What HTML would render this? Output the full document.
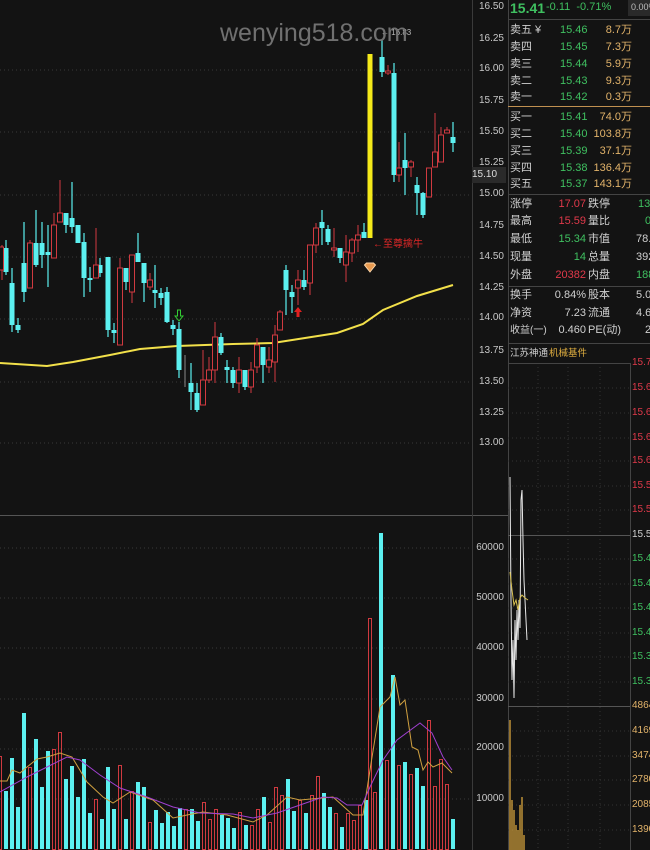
<!DOCTYPE html>
<html><head><meta charset="utf-8"><style>
body{margin:0;width:650px;height:850px;background:#131313;overflow:hidden;position:relative;font-family:"Liberation Sans","Noto Sans CJK SC",sans-serif;}
.t{position:absolute;font-size:11px;white-space:nowrap;line-height:13px}
.ax{position:absolute;font-size:10px;color:#c8c8c8;width:32px;text-align:right;left:472px;line-height:12px}
.g{color:#3fc060}.r{color:#e0394a}.o{color:#e2b36a}.w{color:#d0d0d0}
.rl{position:absolute;font-size:10px;left:632px;line-height:12px}
</style></head><body>
<svg width="650" height="850" style="position:absolute;left:0;top:0">
<g stroke="#3a3a3a" stroke-dasharray="1,3" stroke-width="1">
<line x1="0" y1="70" x2="470" y2="70"/><line x1="0" y1="132" x2="470" y2="132"/><line x1="0" y1="195" x2="470" y2="195"/><line x1="0" y1="257" x2="470" y2="257"/><line x1="0" y1="319" x2="470" y2="319"/><line x1="0" y1="382" x2="470" y2="382"/><line x1="0" y1="443" x2="470" y2="443"/>
<line x1="0" y1="548" x2="470" y2="548"/><line x1="0" y1="598" x2="470" y2="598"/><line x1="0" y1="648" x2="470" y2="648"/><line x1="0" y1="699" x2="470" y2="699"/><line x1="0" y1="749" x2="470" y2="749"/><line x1="0" y1="799" x2="470" y2="799"/>
</g>
<line x1="0" y1="515.5" x2="508" y2="515.5" stroke="#555"/>
<line x1="472.5" y1="0" x2="472.5" y2="850" stroke="#3a3a3a"/>
<line x1="508.5" y1="0" x2="508.5" y2="850" stroke="#444"/>
<polyline fill="none" stroke="#f2e04a" stroke-width="2" points="0,363 47,366 73,362 110,355 140,349 177,346 233,344 273,343 337,333 363,324 383,310 417,296 453,285"/>
<g stroke="#5cf0f0" stroke-width="1.2">
<line x1="6" y1="240" x2="6" y2="275"/><line x1="12" y1="268" x2="12" y2="332"/><line x1="18" y1="318" x2="18" y2="333"/><line x1="24" y1="222" x2="24" y2="302"/><line x1="36" y1="210" x2="36" y2="267"/><line x1="42" y1="222" x2="42" y2="268"/><line x1="48" y1="225" x2="48" y2="287"/><line x1="66" y1="213" x2="66" y2="233"/><line x1="72" y1="182" x2="72" y2="233"/><line x1="78" y1="225" x2="78" y2="243"/><line x1="84" y1="233" x2="84" y2="297"/><line x1="90" y1="267" x2="90" y2="292"/><line x1="100" y1="258" x2="100" y2="277"/><line x1="108" y1="257" x2="108" y2="337"/><line x1="114" y1="323" x2="114" y2="343"/><line x1="126" y1="268" x2="126" y2="290"/><line x1="138" y1="233" x2="138" y2="262"/><line x1="144" y1="263" x2="144" y2="302"/><line x1="155" y1="265" x2="155" y2="308"/><line x1="161" y1="288" x2="161" y2="305"/><line x1="167" y1="287" x2="167" y2="323"/><line x1="173" y1="320" x2="173" y2="335"/><line x1="179" y1="322" x2="179" y2="378"/><line x1="191" y1="363" x2="191" y2="410"/><line x1="197" y1="383" x2="197" y2="412"/><line x1="221" y1="333" x2="221" y2="355"/><line x1="227" y1="360" x2="227" y2="383"/><line x1="233" y1="367" x2="233" y2="388"/><line x1="245" y1="370" x2="245" y2="390"/><line x1="263" y1="347" x2="263" y2="383"/><line x1="286" y1="265" x2="286" y2="315"/><line x1="292" y1="285" x2="292" y2="313"/><line x1="304" y1="270" x2="304" y2="290"/><line x1="322" y1="210" x2="322" y2="245"/><line x1="328" y1="225" x2="328" y2="245"/><line x1="340" y1="248" x2="340" y2="263"/><line x1="364" y1="223" x2="364" y2="238"/><line x1="382" y1="40" x2="382" y2="77"/><line x1="394" y1="63" x2="394" y2="182"/><line x1="405" y1="133" x2="405" y2="195"/><line x1="417" y1="177" x2="417" y2="215"/><line x1="423" y1="192" x2="423" y2="218"/><line x1="453" y1="122" x2="453" y2="152"/>
</g>
<g fill="#5cf0f0">
<rect x="3.5" y="248" width="5" height="24"/><rect x="9.5" y="283" width="5" height="42"/><rect x="15.5" y="325" width="5" height="5"/><rect x="21.5" y="263" width="5" height="29"/><rect x="33.5" y="243" width="5" height="22"/><rect x="39.5" y="243" width="5" height="12"/><rect x="45.5" y="252" width="5" height="3"/><rect x="63.5" y="213" width="5" height="12"/><rect x="69.5" y="218" width="5" height="9"/><rect x="75.5" y="225" width="5" height="18"/><rect x="81.5" y="242" width="5" height="36"/><rect x="87.5" y="278" width="5" height="2"/><rect x="97.5" y="265" width="5" height="8"/><rect x="105.5" y="257" width="5" height="73"/><rect x="111.5" y="330" width="5" height="3"/><rect x="123.5" y="268" width="5" height="14"/><rect x="135.5" y="253" width="5" height="9"/><rect x="141.5" y="263" width="5" height="20"/><rect x="152.5" y="290" width="5" height="3"/><rect x="158.5" y="293" width="5" height="5"/><rect x="164.5" y="292" width="5" height="30"/><rect x="170.5" y="325" width="5" height="4"/><rect x="176.5" y="329" width="5" height="41"/><rect x="188.5" y="383" width="5" height="9"/><rect x="194.5" y="393" width="5" height="17"/><rect x="218.5" y="337" width="5" height="16"/><rect x="224.5" y="367" width="5" height="3"/><rect x="230.5" y="370" width="5" height="13"/><rect x="242.5" y="370" width="5" height="17"/><rect x="260.5" y="347" width="5" height="18"/><rect x="283.5" y="270" width="5" height="20"/><rect x="289.5" y="292" width="5" height="5"/><rect x="301.5" y="280" width="5" height="7"/><rect x="319.5" y="222" width="5" height="6"/><rect x="325.5" y="229" width="5" height="13"/><rect x="337.5" y="248" width="5" height="10"/><rect x="361.5" y="232" width="5" height="6"/><rect x="379.5" y="57" width="5" height="15"/><rect x="391.5" y="73" width="5" height="102"/><rect x="402.5" y="160" width="5" height="8"/><rect x="414.5" y="185" width="5" height="8"/><rect x="420.5" y="193" width="5" height="22"/><rect x="450.5" y="137" width="5" height="6"/>
</g>
<g stroke="#d03a40" stroke-width="1">
<line x1="2" y1="245" x2="2" y2="280"/><line x1="30" y1="240" x2="30" y2="288"/><line x1="54" y1="213" x2="54" y2="258"/><line x1="60" y1="180" x2="60" y2="222"/><line x1="96" y1="228" x2="96" y2="278"/><line x1="120" y1="258" x2="120" y2="345"/><line x1="132" y1="255" x2="132" y2="303"/><line x1="150" y1="273" x2="150" y2="290"/><line x1="185" y1="355" x2="185" y2="387" stroke="#888"/><line x1="203" y1="350" x2="203" y2="405"/><line x1="209" y1="357" x2="209" y2="383"/><line x1="215" y1="322" x2="215" y2="383"/><line x1="239" y1="357" x2="239" y2="393"/><line x1="251" y1="362" x2="251" y2="393"/><line x1="257" y1="338" x2="257" y2="373"/><line x1="269" y1="347" x2="269" y2="373"/><line x1="275" y1="325" x2="275" y2="382"/><line x1="280" y1="310" x2="280" y2="330"/><line x1="298" y1="270" x2="298" y2="305"/><line x1="310" y1="245" x2="310" y2="295"/><line x1="316" y1="223" x2="316" y2="253"/><line x1="334" y1="228" x2="334" y2="257"/><line x1="346" y1="235" x2="346" y2="282"/><line x1="352" y1="238" x2="352" y2="262"/><line x1="358" y1="225" x2="358" y2="252"/><line x1="388" y1="65" x2="388" y2="75"/><line x1="399" y1="142" x2="399" y2="182"/><line x1="411" y1="160" x2="411" y2="177"/><line x1="435" y1="113" x2="435" y2="167"/><line x1="441" y1="127" x2="441" y2="162"/><line x1="447" y1="127" x2="447" y2="133"/>
</g>
<g stroke="#d03a40" fill="#131313" stroke-width="1">
<rect x="-0.5" y="247" width="4" height="23"/><rect x="27.5" y="243" width="5" height="45"/><rect x="51.5" y="225" width="5" height="33"/><rect x="57.5" y="213" width="5" height="9"/><rect x="93.5" y="265" width="5" height="13"/><rect x="117.5" y="268" width="5" height="77"/><rect x="129.5" y="255" width="5" height="37"/><rect x="147.5" y="280" width="5" height="7"/><rect x="200.5" y="380" width="5" height="25"/><rect x="206.5" y="370" width="5" height="10"/><rect x="212.5" y="337" width="5" height="33"/><rect x="236.5" y="370" width="5" height="13"/><rect x="248.5" y="370" width="5" height="17"/><rect x="254.5" y="345" width="5" height="22"/><rect x="266.5" y="360" width="5" height="7"/><rect x="272.5" y="335" width="5" height="27"/><rect x="277.5" y="312" width="5" height="18"/><rect x="295.5" y="280" width="5" height="8"/><rect x="307.5" y="245" width="5" height="38"/><rect x="313.5" y="228" width="5" height="17"/><rect x="331.5" y="248" width="5" height="2"/><rect x="343.5" y="252" width="5" height="13"/><rect x="349.5" y="240" width="5" height="13"/><rect x="355.5" y="235" width="5" height="5"/><rect x="385.5" y="71" width="5" height="2"/><rect x="396.5" y="168" width="5" height="7"/><rect x="408.5" y="162" width="5" height="5"/><rect x="426.5" y="168" width="5" height="29"/><rect x="432.5" y="152" width="5" height="15"/><rect x="438.5" y="135" width="5" height="27"/><rect x="444.5" y="130" width="5" height="3"/>
</g>
<rect x="367.5" y="54" width="5" height="184" fill="#f5ea1a"/>
<path d="M298 307 L294 312 L296.5 312 L296.5 317 L299.5 317 L299.5 312 L302 312 Z" fill="#e02020"/>
<path d="M179 321 L175 316 L177.5 316 L177.5 310 L180.5 310 L180.5 316 L183 316 Z" fill="none" stroke="#3c3" stroke-width="1"/>
<path d="M364.5 265 L366.5 263 L373.5 263 L375.5 265 L370 272 Z" fill="#e89a50" stroke="#fcd6a8" stroke-width="1"/>
<text x="373" y="247" font-size="10" fill="#e02828" font-family="Liberation Sans,Noto Sans CJK SC,sans-serif">←至尊擒牛</text>
<text x="381" y="35" font-size="8" fill="#bbb" font-family="Liberation Sans,sans-serif">← 16.83</text>
<g fill="#5cf0f0">
<rect x="4" y="791" width="4" height="58"/><rect x="10" y="758" width="4" height="91"/><rect x="16" y="807" width="4" height="42"/><rect x="22" y="713" width="4" height="136"/><rect x="34" y="739" width="4" height="110"/><rect x="40" y="787" width="4" height="62"/><rect x="46" y="751" width="4" height="98"/><rect x="64" y="779" width="4" height="70"/><rect x="70" y="766" width="4" height="83"/><rect x="76" y="797" width="4" height="52"/><rect x="82" y="759" width="4" height="90"/><rect x="88" y="813" width="4" height="36"/><rect x="100" y="819" width="4" height="30"/><rect x="106" y="767" width="4" height="82"/><rect x="112" y="809" width="4" height="40"/><rect x="124" y="819" width="4" height="30"/><rect x="136" y="782" width="4" height="67"/><rect x="142" y="787" width="4" height="62"/><rect x="154" y="810" width="4" height="39"/><rect x="160" y="823" width="4" height="26"/><rect x="166" y="812" width="4" height="37"/><rect x="172" y="826" width="4" height="23"/><rect x="178" y="808" width="4" height="41"/><rect x="190" y="809" width="4" height="40"/><rect x="196" y="821" width="4" height="28"/><rect x="220" y="815" width="4" height="34"/><rect x="226" y="818" width="4" height="31"/><rect x="232" y="828" width="4" height="21"/><rect x="244" y="825" width="4" height="24"/><rect x="262" y="797" width="4" height="52"/><rect x="286" y="779" width="4" height="70"/><rect x="292" y="811" width="4" height="38"/><rect x="304" y="813" width="4" height="36"/><rect x="322" y="793" width="4" height="56"/><rect x="328" y="807" width="4" height="42"/><rect x="340" y="827" width="4" height="22"/><rect x="364" y="800" width="4" height="49"/><rect x="379" y="533" width="4" height="316"/><rect x="391" y="675" width="4" height="174"/><rect x="403" y="762" width="4" height="87"/><rect x="415" y="768" width="4" height="81"/><rect x="421" y="786" width="4" height="63"/><rect x="451" y="819" width="4" height="30"/>
</g>
<g stroke="#d03a40" fill="none">
<rect x="-1.5" y="756.5" width="3" height="93"/><rect x="28.5" y="767.5" width="3" height="82"/><rect x="52.5" y="749.5" width="3" height="100"/><rect x="58.5" y="732.5" width="3" height="117"/><rect x="94.5" y="799.5" width="3" height="50"/><rect x="118.5" y="765.5" width="3" height="84"/><rect x="130.5" y="791.5" width="3" height="58"/><rect x="148.5" y="822.5" width="3" height="27"/><rect x="184.5" y="809.5" width="3" height="40"/><rect x="202.5" y="802.5" width="3" height="47"/><rect x="208.5" y="819.5" width="3" height="30"/><rect x="214.5" y="809.5" width="3" height="40"/><rect x="238.5" y="812.5" width="3" height="37"/><rect x="250.5" y="825.5" width="3" height="24"/><rect x="256.5" y="809.5" width="3" height="40"/><rect x="268.5" y="822.5" width="3" height="27"/><rect x="274.5" y="787.5" width="3" height="62"/><rect x="280.5" y="795.5" width="3" height="54"/><rect x="298.5" y="800.5" width="3" height="49"/><rect x="310.5" y="795.5" width="3" height="54"/><rect x="316.5" y="776.5" width="3" height="73"/><rect x="334.5" y="813.5" width="3" height="36"/><rect x="346.5" y="813.5" width="3" height="36"/><rect x="352.5" y="820.5" width="3" height="29"/><rect x="358.5" y="805.5" width="3" height="44"/><rect x="368.5" y="618.5" width="3" height="231"/><rect x="373.5" y="792.5" width="3" height="57"/><rect x="385.5" y="760.5" width="3" height="89"/><rect x="397.5" y="765.5" width="3" height="84"/><rect x="409.5" y="774.5" width="3" height="75"/><rect x="427.5" y="720.5" width="3" height="129"/><rect x="433.5" y="786.5" width="3" height="63"/><rect x="439.5" y="759.5" width="3" height="90"/><rect x="445.5" y="784.5" width="3" height="65"/>
</g>
<polyline fill="none" stroke="#d0a040" stroke-width="1" points="0,781 7,781 12,770 20,773 27,767 37,759 47,757 60,753 72,757 87,782 103,797 113,803 130,792 153,800 173,818 187,815 203,812 227,815 253,822 267,815 287,797 300,800 333,797 353,815 363,815 370,770 380,707 390,697 395,677 400,705 405,700 412,747 418,750 423,770 428,762 433,767 442,763 452,773"/>
<polyline fill="none" stroke="#a040d0" stroke-width="1" points="0,792 27,777 47,767 67,757 80,760 100,775 120,788 147,797 173,807 200,813 233,814 253,818 277,813 300,805 323,797 337,798 347,805 362,805 370,787 383,760 397,740 420,723 432,733 443,757 452,770"/>
<g stroke="#333" stroke-dasharray="1,3">
<line x1="508" y1="388" x2="630" y2="388"/><line x1="508" y1="413" x2="630" y2="413"/><line x1="508" y1="438" x2="630" y2="438"/><line x1="508" y1="461" x2="630" y2="461"/><line x1="508" y1="486" x2="630" y2="486"/><line x1="508" y1="510" x2="630" y2="510"/><line x1="508" y1="559" x2="630" y2="559"/><line x1="508" y1="584" x2="630" y2="584"/><line x1="508" y1="608" x2="630" y2="608"/><line x1="508" y1="633" x2="630" y2="633"/><line x1="508" y1="657" x2="630" y2="657"/><line x1="508" y1="682" x2="630" y2="682"/><line x1="508" y1="731" x2="630" y2="731"/><line x1="508" y1="756" x2="630" y2="756"/><line x1="508" y1="780" x2="630" y2="780"/><line x1="508" y1="805" x2="630" y2="805"/><line x1="508" y1="830" x2="630" y2="830"/>
<line x1="538" y1="363" x2="538" y2="850"/><line x1="568" y1="363" x2="568" y2="850"/><line x1="600" y1="363" x2="600" y2="850"/>
</g>
<line x1="508" y1="363.5" x2="630" y2="363.5" stroke="#444"/>
<line x1="508" y1="535.5" x2="630" y2="535.5" stroke="#555"/>
<line x1="508" y1="706.5" x2="630" y2="706.5" stroke="#555"/>
<line x1="630.5" y1="363" x2="630.5" y2="850" stroke="#444"/>
<polyline fill="none" stroke="#e8e8e8" stroke-width="1" points="510,477 511,600 512,680 513,640 514,698 515,620 516,660 517,610 518,640 519,600 520,628 521,500 522,490 523,540 524,580 525,600 526,620 527,640"/>
<polyline fill="none" stroke="#d8c050" stroke-width="1" points="510,572 512,590 514,605 516,600 518,610 520,598 522,595 525,598 528,600"/>
<g stroke="#e8b040" stroke-width="1.2">
<line x1="510" y1="720" x2="510" y2="850"/><line x1="512" y1="800" x2="512" y2="850"/><line x1="514" y1="810" x2="514" y2="850"/><line x1="516" y1="825" x2="516" y2="850"/><line x1="518" y1="830" x2="518" y2="850"/><line x1="520" y1="805" x2="520" y2="850"/><line x1="522" y1="797" x2="522" y2="850"/><line x1="524" y1="835" x2="524" y2="850"/>
</g>
<line x1="508" y1="19.5" x2="650" y2="19.5" stroke="#444"/>
<line x1="508" y1="106.5" x2="650" y2="106.5" stroke="#c09050"/>
<line x1="508" y1="194.5" x2="650" y2="194.5" stroke="#444"/>
<line x1="508" y1="286.5" x2="650" y2="286.5" stroke="#444"/>
<line x1="508" y1="343.5" x2="650" y2="343.5" stroke="#444"/>
<rect x="628" y="0" width="22" height="16" fill="#2a2a2a"/>
<rect x="472" y="167" width="34" height="16" fill="#2a2a2a"/>
</svg>
<div class="t" style="left:220px;top:18px;font-size:25px;line-height:30px;color:#707070">wenying518.com</div>
<div class="ax" style="top:1px">16.50</div><div class="ax" style="top:33px">16.25</div><div class="ax" style="top:63px">16.00</div><div class="ax" style="top:95px">15.75</div><div class="ax" style="top:126px">15.50</div><div class="ax" style="top:157px">15.25</div><div class="ax" style="top:188px">15.00</div><div class="ax" style="top:220px">14.75</div><div class="ax" style="top:251px">14.50</div><div class="ax" style="top:282px">14.25</div><div class="ax" style="top:312px">14.00</div><div class="ax" style="top:345px">13.75</div><div class="ax" style="top:376px">13.50</div><div class="ax" style="top:407px">13.25</div><div class="ax" style="top:437px">13.00</div>
<div class="ax" style="top:169px;left:472px;text-align:left;color:#ddd">15.10</div>
<div class="ax" style="top:542px">60000</div><div class="ax" style="top:592px">50000</div><div class="ax" style="top:642px">40000</div><div class="ax" style="top:693px">30000</div><div class="ax" style="top:742px">20000</div><div class="ax" style="top:793px">10000</div>
<div class="t g" style="left:510px;top:0px;font-size:14px;line-height:16px;font-weight:bold">15.41</div>
<div class="t g" style="left:546px;top:1px;font-size:11px">-0.11&nbsp;&nbsp;-0.71%</div>
<div class="t" style="left:631px;top:1px;font-size:9px;color:#bbb">0.00%</div>
<div class="t w" style="left:510px;top:24px">卖五 ¥</div><div class="t g" style="left:560px;top:24px">15.46</div><div class="t o" style="left:600px;top:24px;width:32px;text-align:right">8.7万</div>
<div class="t w" style="left:510px;top:41px">卖四</div><div class="t g" style="left:560px;top:41px">15.45</div><div class="t o" style="left:600px;top:41px;width:32px;text-align:right">7.3万</div>
<div class="t w" style="left:510px;top:58px">卖三</div><div class="t g" style="left:560px;top:58px">15.44</div><div class="t o" style="left:600px;top:58px;width:32px;text-align:right">5.9万</div>
<div class="t w" style="left:510px;top:75px">卖二</div><div class="t g" style="left:560px;top:75px">15.43</div><div class="t o" style="left:600px;top:75px;width:32px;text-align:right">9.3万</div>
<div class="t w" style="left:510px;top:91px">卖一</div><div class="t g" style="left:560px;top:91px">15.42</div><div class="t o" style="left:600px;top:91px;width:32px;text-align:right">0.3万</div>
<div class="t w" style="left:510px;top:111px">买一</div><div class="t g" style="left:560px;top:111px">15.41</div><div class="t o" style="left:590px;top:111px;width:42px;text-align:right">74.0万</div>
<div class="t w" style="left:510px;top:128px">买二</div><div class="t g" style="left:560px;top:128px">15.40</div><div class="t o" style="left:590px;top:128px;width:42px;text-align:right">103.8万</div>
<div class="t w" style="left:510px;top:145px">买三</div><div class="t g" style="left:560px;top:145px">15.39</div><div class="t o" style="left:590px;top:145px;width:42px;text-align:right">37.1万</div>
<div class="t w" style="left:510px;top:162px">买四</div><div class="t g" style="left:560px;top:162px">15.38</div><div class="t o" style="left:590px;top:162px;width:42px;text-align:right">136.4万</div>
<div class="t w" style="left:510px;top:178px">买五</div><div class="t g" style="left:560px;top:178px">15.37</div><div class="t o" style="left:590px;top:178px;width:42px;text-align:right">143.1万</div>
<div class="t w" style="left:510px;top:198px">涨停</div><div class="t r" style="left:550px;top:198px;width:36px;text-align:right">17.07</div><div class="t w" style="left:588px;top:198px">跌停</div><div class="t g" style="left:638px;top:198px">13</div>
<div class="t w" style="left:510px;top:215px">最高</div><div class="t r" style="left:550px;top:215px;width:36px;text-align:right">15.59</div><div class="t w" style="left:588px;top:215px">量比</div><div class="t g" style="left:645px;top:215px">0</div>
<div class="t w" style="left:510px;top:233px">最低</div><div class="t g" style="left:550px;top:233px;width:36px;text-align:right">15.34</div><div class="t w" style="left:588px;top:233px">市值</div><div class="t w" style="left:636px;top:233px">78.2</div>
<div class="t w" style="left:510px;top:251px">现量</div><div class="t g" style="left:550px;top:251px;width:36px;text-align:right">14</div><div class="t w" style="left:588px;top:251px">总量</div><div class="t w" style="left:636px;top:251px">392</div>
<div class="t w" style="left:510px;top:269px">外盘</div><div class="t r" style="left:540px;top:269px;width:46px;text-align:right">20382</div><div class="t w" style="left:588px;top:269px">内盘</div><div class="t g" style="left:636px;top:269px">188</div>
<div class="t w" style="left:510px;top:289px">换手</div><div class="t w" style="left:540px;top:289px;width:46px;text-align:right">0.84%</div><div class="t w" style="left:588px;top:289px">股本</div><div class="t w" style="left:636px;top:289px">5.08</div>
<div class="t w" style="left:510px;top:307px">净资</div><div class="t w" style="left:540px;top:307px;width:46px;text-align:right">7.23</div><div class="t w" style="left:588px;top:307px">流通</div><div class="t w" style="left:636px;top:307px">4.69</div>
<div class="t w" style="left:510px;top:324px;font-size:10px">收益(一)</div><div class="t w" style="left:546px;top:324px;width:40px;text-align:right">0.460</div><div class="t w" style="left:588px;top:324px">PE(动)</div><div class="t w" style="left:645px;top:324px">2</div>
<div class="t w" style="left:510px;top:347px;font-size:9.5px">江苏神通</div><div class="t" style="left:549px;top:347px;font-size:9.5px;color:#e2b040">机械基件</div>
<div class="rl r" style="top:357px">15.70</div><div class="rl r" style="top:382px">15.67</div><div class="rl r" style="top:407px">15.65</div><div class="rl r" style="top:432px">15.62</div><div class="rl r" style="top:455px">15.60</div><div class="rl r" style="top:480px">15.57</div><div class="rl r" style="top:504px">15.55</div><div class="rl w" style="top:529px">15.52</div><div class="rl g" style="top:553px">15.49</div><div class="rl g" style="top:578px">15.47</div><div class="rl g" style="top:602px">15.44</div><div class="rl g" style="top:627px">15.42</div><div class="rl g" style="top:651px">15.39</div><div class="rl g" style="top:676px">15.37</div><div class="rl o" style="top:700px">4864</div><div class="rl o" style="top:725px">4169</div><div class="rl o" style="top:750px">3474</div><div class="rl o" style="top:774px">2780</div><div class="rl o" style="top:799px">2085</div><div class="rl o" style="top:824px">1390</div>
</body></html>
